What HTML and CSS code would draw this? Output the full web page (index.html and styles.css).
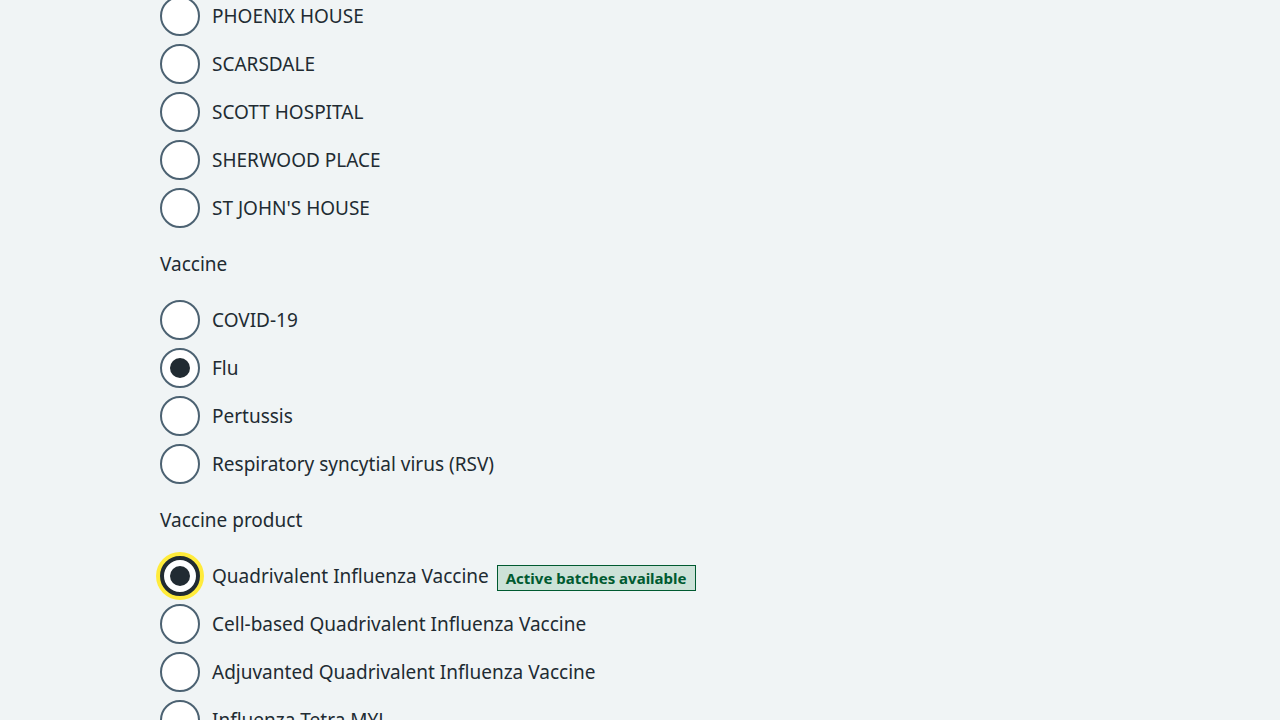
FILE: index.html
```html
<!DOCTYPE html>
<html lang="en">
<head>
<meta charset="utf-8">
<title>Record vaccination</title>
<link rel="stylesheet" href="styles.css">
</head>
<body>
<main class="page">
  <fieldset class="group group-top">
    <div class="radios">
      <label class="radio"><span class="ctl"></span><span class="txt">PHOENIX HOUSE</span></label>
      <label class="radio"><span class="ctl"></span><span class="txt">SCARSDALE</span></label>
      <label class="radio"><span class="ctl"></span><span class="txt">SCOTT HOSPITAL</span></label>
      <label class="radio"><span class="ctl"></span><span class="txt">SHERWOOD PLACE</span></label>
      <label class="radio"><span class="ctl"></span><span class="txt">ST JOHN'S HOUSE</span></label>
    </div>
  </fieldset>
  <fieldset class="group">
    <legend class="legend">Vaccine</legend>
    <div class="radios">
      <label class="radio"><span class="ctl"></span><span class="txt">COVID-19</span></label>
      <label class="radio"><span class="ctl checked"></span><span class="txt">Flu</span></label>
      <label class="radio"><span class="ctl"></span><span class="txt">Pertussis</span></label>
      <label class="radio"><span class="ctl"></span><span class="txt">Respiratory syncytial virus (RSV)</span></label>
    </div>
  </fieldset>
  <fieldset class="group">
    <legend class="legend">Vaccine product</legend>
    <div class="radios">
      <label class="radio"><span class="ctl checked focused"></span><span class="txt">Quadrivalent Influenza Vaccine <strong class="tag">Active batches available</strong></span></label>
      <label class="radio"><span class="ctl"></span><span class="txt">Cell-based Quadrivalent Influenza Vaccine</span></label>
      <label class="radio"><span class="ctl"></span><span class="txt">Adjuvanted Quadrivalent Influenza Vaccine</span></label>
      <label class="radio"><span class="ctl"></span><span class="txt">Influenza Tetra MYL</span></label>
    </div>
  </fieldset>
</main>
</body>
</html>
```
FILE: styles.css
```css
html, body {
  margin: 0;
  padding: 0;
  background: #f0f4f5;
  color: #212b32;
  font-family: "Noto Sans", "Liberation Sans", sans-serif;
  font-size: 19px;
  height: 720px;
  overflow: hidden;
}
.page {
  width: 960px;
  margin: 0 auto;
  padding-top: 0;
  margin-top: -4px;
}
.group {
  border: 0;
  margin: 0;
  padding: 0;
  min-width: 0;
}
.group + .group {
  margin-top: 22px;
}
.legend {
  padding: 0;
  margin: 0 0 22px 0;
  line-height: 28px;
  font-size: 19px;
  float: left;
  width: 100%;
}
.legend + .radios {
  clear: both;
}
.radios {
  display: flex;
  flex-direction: column;
  gap: 8px;
}
.radio {
  display: flex;
  align-items: center;
  gap: 12px;
  height: 40px;
}
.ctl {
  box-sizing: border-box;
  width: 40px;
  height: 40px;
  flex: none;
  border: 2px solid #4c6272;
  border-radius: 50%;
  background: #ffffff;
  display: flex;
  align-items: center;
  justify-content: center;
}
.ctl.checked::after {
  content: "";
  width: 20px;
  height: 20px;
  border-radius: 50%;
  background: #212b32;
}
.ctl.focused {
  border: 4px solid #212b32;
  box-shadow: 0 0 0 4px #ffeb3b;
}
.txt {
  line-height: 28px;
  white-space: nowrap;
}
.tag {
  display: inline-block;
  box-sizing: border-box;
  height: 26px;
  line-height: 24px;
  padding: 0 8px;
  margin-left: 3px;
  border: 1px solid #005a30;
  background: #cce2d8;
  color: #005a30;
  font-size: 15px;
  font-weight: 700;
  vertical-align: -1px;
}
```
